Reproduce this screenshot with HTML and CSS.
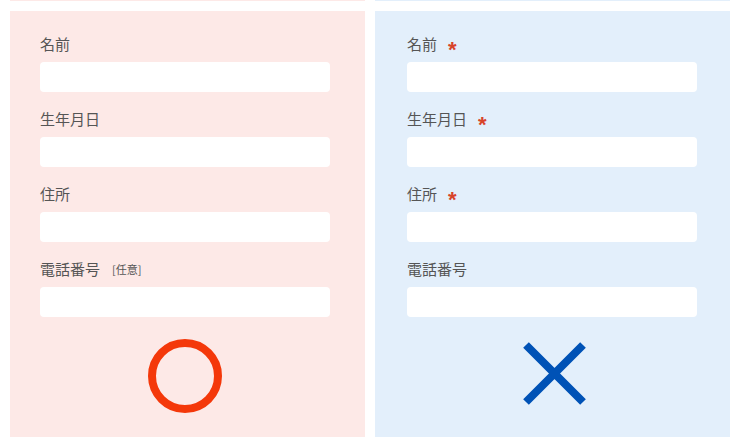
FILE: index.html
```html
<!DOCTYPE html>
<html lang="ja">
<head>
    <meta charset="UTF-8">
    <meta name="viewport" content="width=device-width, initial-scale=1.0">
    <title>入力フォームの比較</title>
    <link rel="stylesheet" href="styles.css">
</head>
<body>
    <div class="compare">
        <div class="strip strip-good"></div>
        <div class="strip strip-bad"></div>

        <div class="panel panel-good">
            <div class="form-group">
                <label>名前</label>
                <div class="field"></div>
            </div>
            <div class="form-group">
                <label>生年月日</label>
                <div class="field"></div>
            </div>
            <div class="form-group">
                <label>住所</label>
                <div class="field"></div>
            </div>
            <div class="form-group">
                <label>電話番号<span class="optional">[任意]</span></label>
                <div class="field"></div>
            </div>
            <div class="mark">
                <svg width="74" height="74" viewBox="0 0 74 74">
                    <circle cx="37" cy="37" r="33" fill="none" stroke="#f4380a" stroke-width="8"/>
                </svg>
            </div>
        </div>

        <div class="panel panel-bad">
            <div class="form-group">
                <label>名前<span class="required">*</span></label>
                <div class="field"></div>
            </div>
            <div class="form-group">
                <label>生年月日<span class="required">*</span></label>
                <div class="field"></div>
            </div>
            <div class="form-group">
                <label>住所<span class="required">*</span></label>
                <div class="field"></div>
            </div>
            <div class="form-group">
                <label>電話番号</label>
                <div class="field"></div>
            </div>
            <div class="mark">
                <svg width="74" height="74" viewBox="0 0 74 74">
                    <path d="M8 6 L65 63 M65 6 L8 63" fill="none" stroke="#0052b6" stroke-width="8"/>
                </svg>
            </div>
        </div>
    </div>
</body>
</html>
```

FILE: styles.css
```css
body {
    margin: 0;
    background-color: #fff;
    color: #555;
    font-family: 'Noto Sans CJK JP', 'Noto Sans', sans-serif;
}

.compare {
    display: grid;
    grid-template-columns: 355px 355px;
    column-gap: 10px;
    row-gap: 10px;
    padding-left: 10px;
}

.strip {
    height: 1px;
}

.strip-good {
    background-color: #fde9e7;
}

.strip-bad {
    background-color: #e3effb;
}

.panel {
    padding: 23px 0 24px;
    height: 426px;
    box-sizing: border-box;
}

.panel-good {
    background-color: #fde9e7;
    padding-left: 30px;
}

.panel-bad {
    background-color: #e3effb;
    padding-left: 32px;
}

.form-group {
    width: 290px;
    margin-bottom: 17px;
}

label {
    display: block;
    height: 20px;
    font-size: 15px;
    line-height: 20px;
    margin-bottom: 8px;
}

.field {
    height: 30px;
    background-color: #fff;
    border-radius: 4px;
}

.optional {
    font-size: 11px;
    margin-left: 12px;
    vertical-align: 1px;
}

.required {
    color: #d8432a;
    font-family: 'Liberation Sans', sans-serif;
    font-weight: bold;
    font-size: 22px;
    line-height: 0;
    margin-left: 11px;
    vertical-align: -7px;
}

.mark {
    width: 290px;
    margin-top: 22px;
    display: flex;
    justify-content: center;
}

.panel-bad .mark svg {
    margin-left: 6px;
}
```
